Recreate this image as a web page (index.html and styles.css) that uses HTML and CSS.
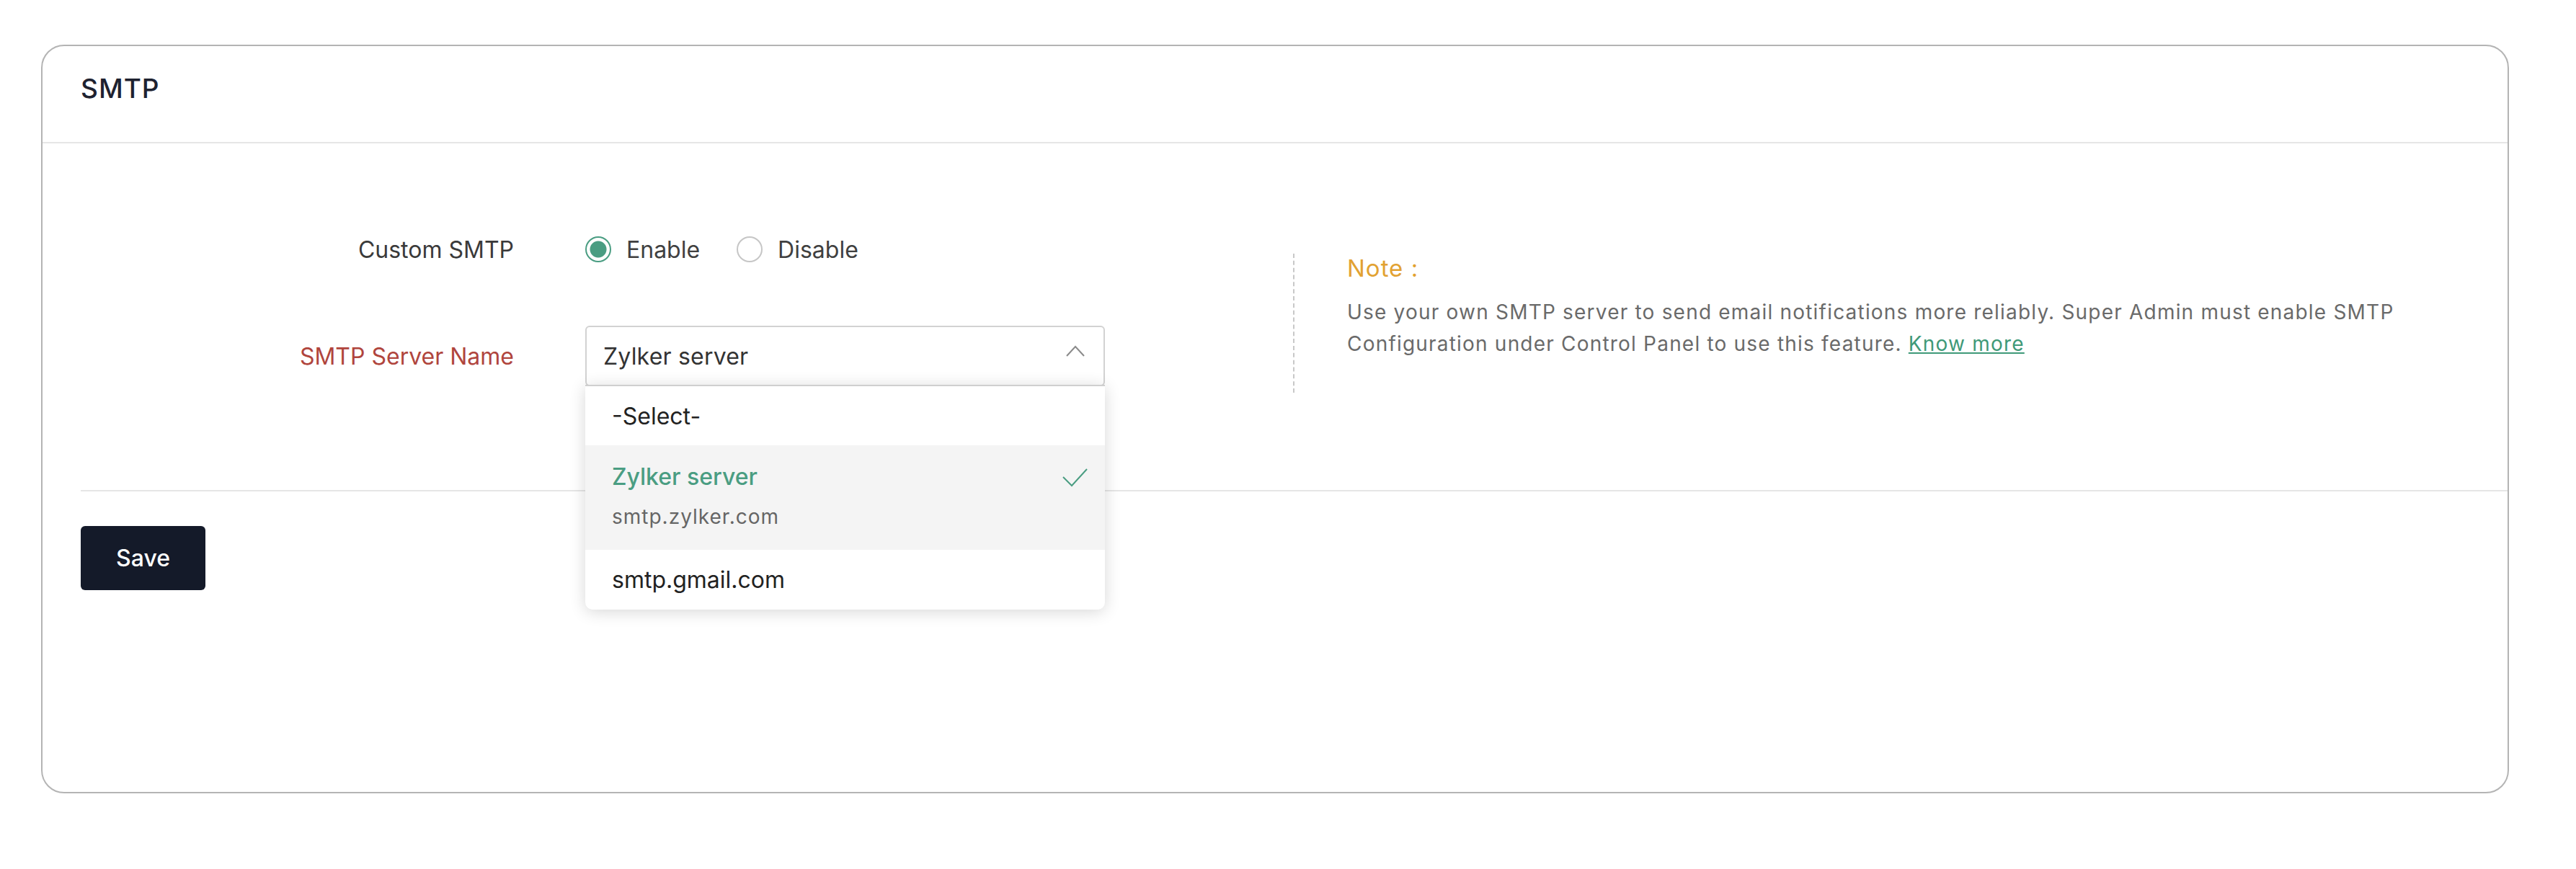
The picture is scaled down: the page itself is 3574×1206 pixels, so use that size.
FILE: index.html
```html
<!DOCTYPE html>
<html>
  <head>
    <meta charset="UTF-8" />
    <title>SMTP</title>
    <link rel="stylesheet" href="styles.css">
  </head>
  <body>

  <div class="card">
    <div class="card-head">
      <h2>SMTP</h2>
    </div>

    <div class="card-body">
      <form class="form" name="smtp">
        <div class="row">
          <label class="label">Custom SMTP</label>
          <div class="control radios">
            <span class="radio checked"></span><span class="radio-text">Enable</span>
            <span class="radio"></span><span class="radio-text">Disable</span>
          </div>
        </div>

        <div class="row">
          <label class="label required">SMTP Server Name</label>
          <div class="control select-wrap">
            <div class="select">
              <span>Zylker server</span>
              <svg class="chevron" width="26" height="16" viewBox="0 0 26 16">
                <path d="M1 15 L13 2 L25 15" fill="none" stroke="#8a8a8a" stroke-width="2"/>
              </svg>
            </div>
            <ul class="dropdown">
              <li class="option">-Select-</li>
              <li class="option active">
                <div class="option-title">Zylker server</div>
                <div class="option-sub">smtp.zylker.com</div>
                <svg class="check" width="36" height="26" viewBox="0 0 36 26">
                  <path d="M1 12 L13 24 L34 1" fill="none" stroke="#4a9d82" stroke-width="2"/>
                </svg>
              </li>
              <li class="option">smtp.gmail.com</li>
            </ul>
          </div>
        </div>
      </form>

      <div class="note">
        <h3>Note :</h3>
        <p>Use your own SMTP server to send email notifications more reliably. Super Admin must enable SMTP<br>Configuration under Control Panel to use this feature. <a href="#">Know more</a></p>
      </div>
    </div>

    <div class="card-foot">
      <button class="btn" type="button">Save</button>
    </div>
  </div>

  </body>
</html>
```

FILE: styles.css
```css
body {
  margin: 0;
  background: #FFFFFF;
  font-family: "Inter", "Noto Sans", sans-serif;
  color: #333333;
}

.card {
  margin: 62px 93px 0 57px;
  height: 1039px;
  box-sizing: border-box;
  border: 2px solid #B4B4B4;
  border-radius: 32px;
}

.card-head {
  height: 133px;
  padding: 0 53px;
  border-bottom: 2px solid #E6E6E6;
  display: flex;
  align-items: center;
}

h2 {
  margin: 0 0 16px 0;
  font-size: 37px;
  font-weight: 500;
  letter-spacing: 1px;
  color: #1E2230;
}

.card-body {
  display: flex;
  align-items: flex-start;
  padding-top: 105px;
}

.form {
  width: 1474px;
  flex: none;
  padding-bottom: 144px;
}

.row {
  display: flex;
  align-items: center;
  height: 84px;
  margin-bottom: 64px;
}

.row:last-child {
  margin-bottom: 0;
}

.label {
  width: 654px;
  margin-right: 99px;
  text-align: right;
  font-size: 32px;
  color: #3A3A3A;
}

.required {
  color: #B0453D;
}

.control {
  width: 721px;
}

.radios {
  display: flex;
  align-items: center;
  font-size: 32px;
  color: #404040;
}

.radio {
  width: 36px;
  height: 36px;
  box-sizing: border-box;
  border: 2px solid #C6C6C6;
  border-radius: 50%;
  margin-right: 21px;
}

.radio.checked {
  border-color: #4A9D82;
  background: radial-gradient(circle, #4A9D82 0, #4A9D82 11px, #FFFFFF 12px);
}

.radio-text {
  margin-right: 51px;
}

.select-wrap {
  position: relative;
  height: 84px;
}

.select {
  height: 84px;
  box-sizing: border-box;
  border: 2px solid #D2D2D2;
  border-radius: 6px;
  padding: 0 26px 0 23px;
  display: flex;
  align-items: center;
  justify-content: space-between;
  font-size: 32px;
  letter-spacing: 0.2px;
  color: #333333;
}

.chevron {
  margin-top: -14px;
}

.dropdown {
  position: absolute;
  top: 82px;
  left: 0;
  width: 721px;
  margin: 0;
  padding: 0;
  list-style: none;
  background: #FFFFFF;
  border-top: 2px solid #CFCFCF;
  border-radius: 0 0 10px 10px;
  box-shadow: 0 3px 22px rgba(0, 0, 0, 0.16);
  overflow: hidden;
}

.option {
  position: relative;
  height: 83px;
  padding-left: 37px;
  display: flex;
  align-items: center;
  font-size: 32px;
  color: #222222;
}

.option:first-child {
  height: 82px;
}

.option.active {
  height: 145px;
  box-sizing: border-box;
  padding-top: 22px;
  background: #F4F4F4;
  flex-direction: column;
  align-items: flex-start;
}

.option-title {
  color: #4A9D82;
  font-weight: 500;
  line-height: 44px;
}

.option-sub {
  margin-top: 15px;
  font-size: 28px;
  letter-spacing: 1px;
  color: #666666;
  line-height: 36px;
}

.check {
  position: absolute;
  right: 23px;
  top: 32px;
}

.note {
  margin: 48px 0 0 261px;
  height: 193px;
  padding-left: 73px;
  border-left: 2px dashed #C8C8C8;
}

.note h3 {
  margin: 0;
  font-size: 33px;
  font-weight: 400;
  letter-spacing: 1px;
  line-height: 40px;
  color: #E2A232;
}

.note p {
  margin: 19px 0 0 0;
  font-size: 28px;
  letter-spacing: 1.2px;
  line-height: 44px;
  color: #6A6A6A;
  white-space: nowrap;
}

.note a {
  color: #3F9978;
}

.card-foot {
  margin-left: 53px;
  padding-top: 48px;
  border-top: 2px solid #E6E6E6;
}

.btn {
  width: 173px;
  height: 89px;
  border: none;
  border-radius: 6px;
  background: #141A29;
  color: #FFFFFF;
  font-family: "Inter", "Noto Sans", sans-serif;
  font-size: 32px;
  font-weight: 500;
}
```
